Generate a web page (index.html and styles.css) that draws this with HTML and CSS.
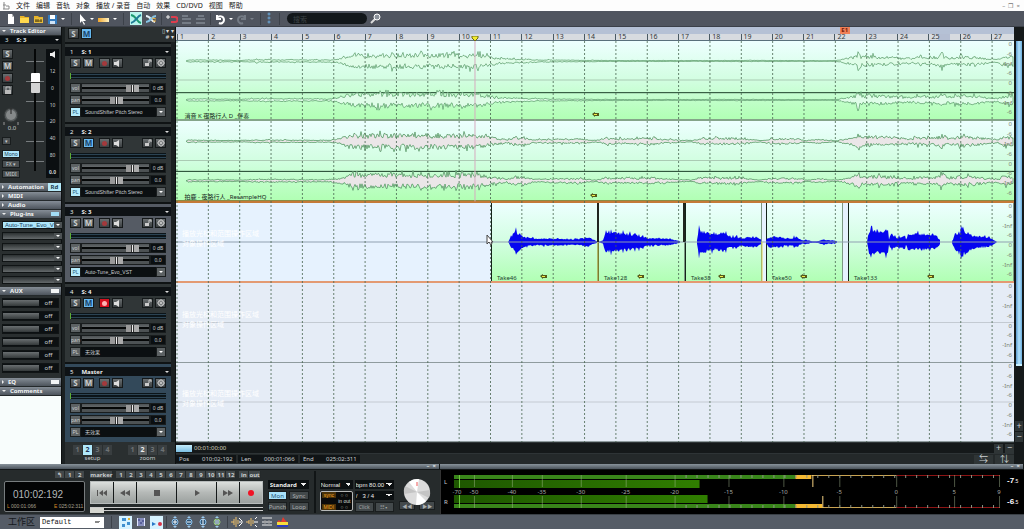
FILE: index.html
```html
<!DOCTYPE html>
<html lang="zh-CN">
<head>
<meta charset="utf-8">
<title>Track Editor</title>
<link rel="stylesheet" href="styles.css">
</head>
<body>
<nav class="menu">
  <svg class="app-icon" width="8" height="9" viewBox="0 0 8 9"><path d="M2 1v7M1 4h3M4 5h3v3H1" fill="none" stroke="#888"/></svg>
  <a href="#">文件</a><a href="#">编辑</a><a href="#">音轨</a><a href="#">对象</a><a href="#">播放 / 录音</a><a href="#">自动</a><a href="#">效果</a><a href="#">CD/DVD</a><a href="#">视图</a><a href="#">帮助</a>
  <span class="window-buttons">–&nbsp; ❐&nbsp; ×</span>
</nav>

<header class="toolbar">
  <button aria-label="New"><svg width="10" height="12" viewBox="0 0 10 12"><path d="M2 1h4l2 3v7H2z" fill="#fff"/><path d="M6 1v3h2" fill="#bbb"/></svg></button>
  <button aria-label="Open"><svg width="11" height="12" viewBox="0 0 11 12"><path d="M1 3h4l1 1h4v6H1z" fill="#e8b428"/><path d="M1 5h9v5H1z" fill="#ffd94e"/></svg></button>
  <button aria-label="Import"><svg width="11" height="12" viewBox="0 0 11 12"><path d="M1 3h4l1 1h4v6H1z" fill="#e8b428"/><path d="M1 5h9v5H1z" fill="#e6bd3e"/><path d="M2 8h7M3 6v3M5 6v3M8 6v3" stroke="#5f4b10"/></svg></button>
  <button aria-label="Save"><svg width="11" height="12" viewBox="0 0 11 12"><path d="M1 2h9v9H1z" fill="#347bbd"/><path d="M3 2h5v4H3z" fill="#fff"/><path d="M3 8h5v3H3z" fill="#cfe4f7"/></svg></button>
  <span class="caret"></span><i class="sep"></i>
  <button aria-label="Pointer"><svg width="9" height="12" viewBox="0 0 9 12"><path d="M2 1v9l2-2 2 4 1-1-2-3h3z" fill="#fff"/></svg></button>
  <span class="caret"></span>
  <button aria-label="Colour"><svg width="13" height="12" viewBox="0 0 13 12"><defs><linearGradient id="gold"><stop stop-color="#f1a62c"/><stop offset="1" stop-color="#fff3c4"/></linearGradient></defs><path d="M1 5h11v4H1z" fill="url(#gold)"/></svg></button>
  <span class="caret"></span><i class="sep"></i>
  <button class="lit" aria-label="Crossfade"><svg width="12" height="12" viewBox="0 0 12 12"><path d="M1 2C7 3 6 9 11 10" fill="none" stroke="#1c9a70" stroke-width="2"/><path d="M1 10C6 9 7 3 11 2" fill="none" stroke="#1f7d98" stroke-width="2"/></svg></button>
  <button aria-label="Auto crossfade"><svg width="12" height="12" viewBox="0 0 12 12"><path d="M1 3C6 3 6 9 10 9" fill="none" stroke="#e8f2f8" stroke-width="2"/><path d="M1 9C6 9 6 3 11 3" fill="none" stroke="#86c4e6" stroke-width="2"/><path d="M7 5l4 1M8 8h3" stroke="#efb23c"/></svg></button>
  <i class="sep narrow"></i>
  <button aria-label="Snap"><svg width="12" height="12" viewBox="0 0 12 12"><path d="M5 4h4a2 2 0 0 1 0 5H5" fill="none" stroke="#dc3d4e" stroke-width="2"/><path d="M0 4h4M2 2v4" stroke="#eee"/></svg></button>
  <button aria-label="Align left"><svg width="11" height="12" viewBox="0 0 11 12"><path d="M1 3h6M1 6h9M1 10h9" stroke="#747b85" stroke-width="2"/></svg></button>
  <button aria-label="Align right"><svg width="11" height="12" viewBox="0 0 11 12"><path d="M3 3h6M1 6h9M1 10h9" stroke="#747b85" stroke-width="2"/></svg></button>
  <i class="sep narrow"></i>
  <button aria-label="Undo"><svg width="11" height="12" viewBox="0 0 11 12"><path d="M2 2v4h4M2 5c2-3 7-2 7 2 0 3-3 4-5 3" fill="none" stroke="#fff" stroke-width="2"/></svg></button>
  <span class="caret"></span>
  <button aria-label="Redo"><svg width="11" height="12" viewBox="0 0 11 12"><path d="M9 2v4H5M9 5C7 2 2 3 2 7c0 3 3 4 5 3" fill="none" stroke="#747b85" stroke-width="2"/></svg></button>
  <span class="caret dim"></span><i class="sep"></i>
  <svg width="5" height="13" viewBox="0 0 5 13"><g fill="none" stroke="#6ba8d8"><circle cx="2" cy="2" r="1"/><circle cx="2" cy="6" r="1"/><circle cx="2" cy="10" r="1"/></g></svg>
  <i class="sep wide"></i>
  <input class="search" type="text" value="搜索" aria-label="搜索">
  <svg width="12" height="13" viewBox="0 0 12 13"><path d="M5 7l-4 4" stroke="#ddd" stroke-width="2"/><circle cx="7" cy="5" r="3" fill="#8a919a" stroke="#fff"/></svg>
</header>

<main class="work">
  <aside class="editor">
    <h2 class="bar"><i class="tri down"></i>Track Editor</h2>
    <div class="editor-name"><span>3</span><b>S: 3</b><i class="tri-w"></i></div>
    <section class="strip">
      <div class="strip-left">
        <button class="key">S</button><button class="key">M</button><button class="key" aria-label="Record"><i class="rec"></i></button><button class="key" aria-label="Lock"><svg width="8" height="8" viewBox="0 0 8 8"><path d="M1 4h6v4H1z" fill="#bbb"/><path d="M2 4V1h4v3" fill="none" stroke="#bbb"/></svg></button>
        <svg class="dial" width="20" height="22" viewBox="0 0 20 22"><circle cx="9" cy="10" r="7" fill="#555a5b" stroke="#303435"/><circle cx="9" cy="10" r="5" fill="#85898a"/><path d="M9 3v6" stroke="#222"/><path d="M2 17v3M16 17v3" stroke="#999"/></svg>
        <span class="dial-value">0.0</span>
        <button class="tiny short">▾</button>
        <button class="tiny on">Mono</button><button class="tiny">FX ▾</button><button class="tiny">MIDI</button>
      </div>
      <div class="fader"><input type="range" min="0" max="100" value="76" aria-label="Volume"></div>
      <div class="scale"><svg width="7" height="7" viewBox="0 0 7 7"><path d="M1 2h2l3-2v7L3 5H1z" fill="#eee"/></svg><span>12</span><span>0</span><span>10</span><span>20</span><span>40</span><span>80</span><b>0.0</b></div>
    </section>
    <h2 class="bar"><i class="tri"></i>Automation<span class="rd">Rd</span></h2>
    <h2 class="bar"><i class="tri"></i>MIDI</h2>
    <h2 class="bar"><i class="tri"></i>Audio</h2>
    <h2 class="bar"><i class="tri down"></i>Plug-ins<span class="led blue"></span></h2>
    <div class="slots" id="slots"></div>
    <h2 class="bar"><i class="tri down"></i>AUX<span class="led"></span></h2>
    <div class="aux" id="aux"></div>
    <h2 class="bar"><i class="tri"></i>EQ<span class="led"></span></h2>
    <h2 class="bar"><i class="tri down"></i>Comments</h2>
    <textarea class="comments" aria-label="Comments"></textarea>
  </aside>

  <section class="tracks">
    <div class="tracks-top"><button class="key">S</button><button class="key blue">M</button><span class="top-tools"><span>▯ ▾ ▾</span><span># ▾</span></span></div>
    <div id="tracks"></div>
    <div class="presets">
      <div><span class="preset-row"><button>1</button><button class="on">2</button><button>3</button><button>4</button></span>setup</div>
      <div><span class="preset-row"><button>1</button><button class="mid">2</button><button>3</button><button>4</button></span>zoom</div>
    </div>
  </section>

  <section class="timeline">
    <div class="ruler-top"><span class="marker">E1</span></div>
    <div class="ruler" id="ruler"></div>
    <div class="lanes" id="lanes"></div>
    <div class="hscroll"><span class="thumb"></span><span class="time">00:01:00:00</span><button aria-label="Zoom in">+</button><button aria-label="Zoom out">−</button></div>
    <div class="posbar"><span><b>Pos</b>010:02:192</span><span><b>Len</b>000:01:066</span><span><b>End</b>025:02:311</span><button class="end" aria-label="Fit horizontally">⇆</button><button aria-label="Fit vertically">⇅</button></div>
  </section>

  <div class="vscroll"><span class="vthumb"></span><button aria-label="Zoom in">+</button><button aria-label="Zoom out">−</button></div>
</main>

<section class="dock">
  <div class="transport">
    <div class="grip"><span>–&nbsp; ×</span></div>
    <div class="transport-body">
      <div class="position">
        <div class="nums right"><button>↰</button><button>1</button><button>2</button></div>
        <div class="display"><strong>010:02:192</strong><div><span>L <em>000:01:066</em></span><span>E <em>025:02:311</em></span></div></div>
      </div>
      <div class="play">
        <div class="nums"><button>marker</button><i></i><button>1</button><button>2</button><button>3</button><button>4</button><button>5</button><button>6</button><button>7</button><button>8</button><button>9</button><button>10</button><button>11</button><button>12</button><i></i><button>in</button><button>out</button></div>
        <div class="keys">
          <button aria-label="To start"><svg width="12" height="8" viewBox="0 0 12 8"><path d="M1 1h1v6H1zM7 1v6L3 4zM11 1v6L7 4z" fill="#555"/></svg></button>
          <button aria-label="Rewind"><svg width="12" height="8" viewBox="0 0 12 8"><path d="M6 1v6L1 4zM11 1v6L6 4z" fill="#555"/></svg></button>
          <button aria-label="Stop"><svg width="8" height="8" viewBox="0 0 8 8"><path d="M1 1h6v6H1z" fill="#555"/></svg></button>
          <button aria-label="Play"><svg width="8" height="8" viewBox="0 0 8 8"><path d="M2 1l5 3-5 3z" fill="#555"/></svg></button>
          <button aria-label="Forward"><svg width="12" height="8" viewBox="0 0 12 8"><path d="M1 1l5 3-5 3zM6 1l5 3-5 3z" fill="#555"/></svg></button>
          <button aria-label="Record"><svg width="8" height="8" viewBox="0 0 8 8"><circle cx="4" cy="4" r="3" fill="#f01325"/></svg></button>
        </div>
        <input class="scrub" type="range" min="0" max="100" value="0" aria-label="Scrub">
      </div>
      <div class="modes">
        <select aria-label="Mode"><option>Standard</option></select>
        <button class="on">Mon</button><button>Sync</button><button>Punch</button><button>Loop</button>
      </div>
      <div class="tempo">
        <select aria-label="Speed"><option>Normal</option></select><select aria-label="Tempo"><option>bpm 80.00</option></select>
        <div class="sync"><span class="tag">sync</span><span>○ ○</span><span></span><span>in out</span><span class="tag">MIDI</span><span>○ ○</span></div>
        <select aria-label="Meter"><option>/ &nbsp; 3 / 4</option></select>
        <div class="click"><button>Click</button><button>☷▪</button></div>
      </div>
      <div class="jog"><svg width="28" height="28" viewBox="0 0 28 28"><circle cx="14" cy="14" r="13" fill="#dcdcdc"/><path d="M14 14L6 4a13 13 0 0 1 10-3zM14 14l9 9a13 13 0 0 1-10 4z" fill="#fff"/><path d="M14 14L1 16a13 13 0 0 1 1-8zM14 14l13-2a13 13 0 0 1-1 8z" fill="#c4c4c4"/><path d="M14 4v4" stroke="#e55"/></svg><div><button>◀◀</button><button>▶▶</button></div></div>
    </div>
  </div>
  <div class="meters">
    <div class="grip"><span>–&nbsp; ×</span></div>
    <div class="meters-body">
      <div class="lr"><span>L</span><span>R</span></div>
      <svg id="meter" class="meter" height="44"></svg>
      <div class="peaks"><b>-7<small>.5</small></b><b>-6<small>.5</small></b></div>
    </div>
  </div>
</section>

<footer class="footbar">
  <label for="ws">工作区</label><select id="ws"><option>Default</option></select>
  <i class="sep first"></i>
  <button class="lit" aria-label="Blocks"><svg width="12" height="12" viewBox="0 0 12 12"><path d="M2 2h4v3H2zM7 6h3v3H7zM2 8h3v3H2z" fill="#3f8fd0"/><path d="M8 2h2v2H8z" fill="#e7b52d"/></svg></button>
  <button aria-label="Mixer"><svg width="12" height="12" viewBox="0 0 12 12"><path d="M2 2h8v8H2z" fill="#dfe6ff"/><path d="M4 2v8M6 2v8M8 2v8M3 4h2M5 7h2M7 5h2" stroke="#2a3378"/></svg></button>
  <button class="lit" aria-label="Transport"><svg width="12" height="12" viewBox="0 0 12 12"><path d="M1 6l4 2-4 2z" fill="#2a78c8"/><circle cx="9" cy="8" r="2" fill="#d8364a"/></svg></button>
  <i class="sep"></i>
  <span class="lenses" id="lenses"></span>
  <i class="sep"></i>
  <button aria-label="Wave in"><svg width="12" height="12" viewBox="0 0 12 12"><path d="M0 6h3M3 3v6M5 1v10M7 4v4" stroke="#eec06a"/><path d="M8 2l3 3M8 10l3-3M8 6h4" stroke="#fff"/></svg></button>
  <button aria-label="Wave out"><svg width="12" height="12" viewBox="0 0 12 12"><path d="M0 6h3M3 4v4M5 2v8M7 4v4" stroke="#eec06a"/><path d="M9 3l2-2M9 9l2 2M8 6h4" stroke="#fff"/></svg></button>
  <button aria-label="Lines"><svg width="12" height="12" viewBox="0 0 12 12"><path d="M1 2h10M1 6h10M1 9h10" stroke="#eee"/><path d="M4 4v4M8 4v5" stroke="#999"/></svg></button>
  <button aria-label="Spectrum"><svg width="13" height="12" viewBox="0 0 13 12"><path d="M1 8V6l2-2 2 2 2-5 2 3 3 3v1z" fill="#e53b2e"/><path d="M1 6h11v3H1z" fill="#f6dc3c"/><path d="M1 9h11v2H1z" fill="#2c3bbd"/></svg></button>
</footer>
<script src="app.js"></script>
</body>
</html>
```
FILE: styles.css
```css
* { box-sizing: border-box; }
body {
  margin: 0; min-height: 100vh; display: flex; flex-direction: column;
  background: #1e2324; color: #c9cdcf;
  font: 6px/8px "Noto Sans", "Noto Sans CJK SC", sans-serif;
}
button, input, select, textarea { font: inherit; color: inherit; border: 0; padding: 0; margin: 0; }
button { display: flex; align-items: center; justify-content: center; background: none; }
svg { display: block; flex: none; }
select { appearance: none; border-radius: 0; }
h2 { margin: 0; font: inherit; }

.menu { height: 11px; display: flex; align-items: center; gap: 6px; padding: 0 4px 0 2px; background: #fdfdfd; font-size: 7px; }
.menu a { color: #222; text-decoration: none; white-space: nowrap; }
.window-buttons { margin-left: auto; color: #777; font-size: 6px; }

.toolbar { height: 16px; display: flex; align-items: center; gap: 3px; padding: 0 6px; background: #50555f; border-bottom: 1px solid #3b4048; }
.toolbar .lit { background: #b9f4ec; height: 13px; }
.sep { width: 1px; height: 12px; margin: 0 3px; background: #3c4149; }
.sep.narrow { margin: 0 1px; }
.sep.wide { margin: 0 4px; }
.caret { border: 2px solid transparent; border-top-color: #fff; border-bottom: 0; }
.caret.dim { border-top-color: #7a818b; }
.search { width: 80px; height: 11px; border-radius: 6px; background: #12171a; color: #3c4346; padding: 0 6px; font-size: 7px; }

.work { flex: 1; display: grid; grid-template-columns: 62px 114px minmax(0, 1fr) 10px; }

.editor { background: #2a2f30; border-right: 1px solid #0d1011; display: flex; flex-direction: column; }
.bar { height: 9px; display: flex; align-items: center; gap: 4px; padding-left: 2px; background: linear-gradient(#858d96, #4d545c); color: #f1f3f4; font-weight: bold; border-bottom: 1px solid #24292b; }
.tri { border: 2px solid transparent; border-left-color: #eee; border-right: 0; }
.tri.down { border: 2px solid transparent; border-top-color: #eee; border-bottom: 0; }
.tri-w { border: 2px solid transparent; border-top-color: #ddd; border-bottom: 0; margin-left: auto; }
.rd { margin-left: auto; width: 16px; height: 8px; background: #b5eaf9; color: #1c3e52; text-align: center; }
.led { margin: 0 2px 0 auto; width: 8px; height: 4px; background: #f2f4f5; }
.led.blue { background: #a3dcf5; }
.editor-name { height: 8px; display: flex; align-items: center; gap: 8px; padding: 0 2px 0 5px; background: #0b1013; color: #dfe2e3; }
.strip { height: 139px; display: grid; grid-template-columns: 22px 18px 13px; gap: 2px; padding: 5px 2px 7px; }
.strip-left { display: flex; flex-direction: column; align-items: flex-start; gap: 2px; }
.key { width: 11px; height: 10px; background: linear-gradient(#6a6f71, #3b4042); border: 1px solid #15191a; color: #c9cdce; font: bold 8px/8px "Noto Sans", sans-serif; }
.key.blue { background: #69b8ee; color: #19456a; }
.key.hot { background: #d40f1e; }
.rec { width: 5px; height: 5px; border-radius: 50%; background: #a3393c; }
.hot .rec { background: #ffb4b4; }
.dial { margin-top: 8px; }
.dial-value { width: 20px; margin-top: -5px; text-align: center; }
.tiny { width: 18px; height: 8px; background: #4b5052; border: 1px solid #191d1e; font-size: 5px; }
.tiny.short { width: 9px; margin: 3px 0; }
.tiny.on { background: #aee6fb; color: #245; }
.fader { display: flex; justify-content: center; background: repeating-linear-gradient(transparent 0 12px, #777c7e 12px 13px, transparent 13px 20px); }
.fader input { appearance: none; writing-mode: vertical-lr; direction: rtl; width: 12px; height: 122px; background: linear-gradient(90deg, transparent 5px, #050707 5px 7px, transparent 7px); }
.fader input::-webkit-slider-thumb { appearance: none; width: 9px; height: 20px; border-radius: 1px; background: linear-gradient(#fff 9px, #333 9px 10px, #d4d4d4 10px); }
.scale { background: #0b0f11; display: flex; flex-direction: column; align-items: center; justify-content: space-between; padding: 2px 0; font-size: 5px; }
.slots { display: grid; grid-auto-rows: 8px; gap: 3px; padding: 2px 2px 3px; }
.slot { display: grid; grid-template-columns: 1fr 8px; background: linear-gradient(#2c3132, #64696b); border: 1px solid #101415; }
.slot.on span { background: #aee6fb; color: #17405c; padding-left: 2px; font-family: "Liberation Sans", sans-serif; line-height: 6px; white-space: nowrap; }
.slot button { background: #4d5254; }
.aux { display: grid; grid-auto-rows: 13px; padding: 0 2px 4px; }
.aux div { display: grid; grid-template-columns: 36px 1fr; height: 10px; margin-top: 2px; border: 1px solid #101415; background: #0c1012; text-align: center; }
.aux i { background: linear-gradient(#6a6f71, #34393a); margin: 1px 0; }
.comments { flex: 1; min-height: 60px; resize: none; background: #f8fdfc; border-radius: 0; }

.tracks { background: #1b2021; padding-left: 3px; border-right: 1px solid #0d1011; display: flex; flex-direction: column; }
.tracks-top { height: 15px; display: flex; align-items: center; gap: 2px; padding: 0 1px 2px 3px; background: #2b3031; }
.tracks-top .key { height: 11px; }
.top-tools { margin-left: auto; text-align: right; line-height: 6px; color: #ddd; display: flex; flex-direction: column; }
.track { height: 80px; margin-right: 4px; padding: 3px 0 0; border-top: 2px solid #0f1314; background: #303637; }
.track.sel { background: #555b64; }
.track.master { background: #33495a; }
.track-name { height: 9px; display: flex; align-items: center; gap: 8px; padding: 0 2px 0 5px; background: #0e1215; color: #eceeef; }
.track-name b { font-size: 6px; }
.track-keys { height: 11px; display: flex; gap: 2px; padding: 0 5px; margin-top: 2px; }
.track-keys .gap { margin-left: 3px; }
.track-keys .far { margin-left: auto; }
.level { height: 6px; margin: 4px 5px; background: linear-gradient(#0c1418 1px, #2b4353 1px 2px, #0c1418 2px 4px, #2b4353 4px 5px, #0c1418 5px); border-left: 1px solid #5cae34; }
.row { display: grid; grid-template-columns: 11px 69px 1fr; height: 10px; margin: 0 5px 2px; font-size: 5px; line-height: 8px; }
.row label { background: #5d6264; border: 1px solid #191d1e; text-align: center; }
.row output { background: #0b0f11; text-align: center; border: 1px solid #191d1e; white-space: nowrap; }
.row input { appearance: none; width: 69px; height: 10px; border: 1px solid #191d1e; background: linear-gradient(#4d5254, #63686a 3px, #050707 3px 5px, #4d5254 5px); }
.row input::-webkit-slider-thumb { appearance: none; width: 13px; height: 7px; background: linear-gradient(90deg, #999 5px, #333 5px 6px, #eee 6px 7px, #333 7px 8px, #aaa 8px); }
.row.pl { grid-template-columns: 11px 1fr 10px; font-family: "Liberation Sans", "Noto Sans CJK SC", sans-serif; margin-bottom: 0; }
.row.pl span { background: #0b0f11; padding-left: 4px; white-space: nowrap; line-height: 10px; }
.row.pl .on { background: #b5ebfc; color: #245a78; }
.row button { background: #5d6264; border: 1px solid #191d1e; }
.row .caret { box-sizing: content-box; }
.presets { flex: 1; display: flex; justify-content: space-around; padding-top: 3px; text-align: center; line-height: 6px; background: #2a2f30; }
.preset-row { display: grid; grid-template-columns: repeat(4, 9px); gap: 1px; }
.preset-row button { height: 10px; background: #393e40; color: #6d7274; font-weight: bold; font-size: 7px; }
.preset-row .on { background: #b0e8fb; color: #235; }
.preset-row .mid { background: #5a5f61; color: #eee; }

.timeline { display: flex; flex-direction: column; background: #15191a; }
.ruler-top { position: relative; height: 7px; background: #b5c1d5; }
.marker { position: absolute; left: 79.2%; top: 0; width: 10px; height: 7px; background: #f08058; color: #731c0c; text-align: center; font-weight: bold; line-height: 7px; }
.ruler { height: 7px; display: grid; grid-template-columns: repeat(26, 313fr) 230fr; padding-left: 1px; background: linear-gradient(#b4bed2, #b4bed2) 92.2% 0 / 12px 7px no-repeat #d7dbe0; border-bottom: 1px solid #59707c; color: #33383c; font-size: 7px; line-height: 6px; position: relative; }
.ruler span { border-left: 1px solid #4a5a64; padding-left: 2px; }
.cue { position: absolute; left: 35.7%; bottom: -1px; margin-left: -4px; }
.lanes { position: relative; display: grid; grid-template-rows: 80px 80px 82px 80px 79px; background: #e5ecf6; color: #20402c; }
.lane { position: relative; overflow: hidden; }
.plot, .grid-lines { position: absolute; inset: 0; width: 100%; height: 100%; }
.lane.audio, .clip { background: linear-gradient(#edffff, #d2fee1 50%, #b1ffb4); }
.lane.l1 { border-bottom: 2px solid #85a58a; }
.lane.l2 { border-bottom: 1px solid #8a8c45; }
.lane.l3 { border-top: 2px solid #c47a38; border-bottom: 2px solid #e39a72; background: #e6f2fe; }
.lane.l4, .lane.l5 { border-bottom: 1px solid #8f9b9e; }
.lane-title { position: absolute; bottom: -1px; left: 1%; color: #14241a; }
.key-mark { position: absolute; bottom: 2px; }
.ghost { position: absolute; left: 6px; color: #fff; font-size: 7px; line-height: 10px; white-space: nowrap; }
.ghost.low { bottom: 32px; }
.clip { position: absolute; top: 0; bottom: 0; border-left: 1px solid #14241a; border-right: 1px solid #7d9884; }
.clip span { position: absolute; left: 5px; bottom: -1px; }
.db { position: absolute; right: 2px; top: 0; bottom: 0; display: flex; flex-direction: column; justify-content: space-between; text-align: right; color: #7d7f70; line-height: 6px; }
.grid-lines { pointer-events: none; }
.hscroll, .posbar { height: 11px; display: flex; align-items: center; gap: 2px; border-top: 1px solid #2e3436; }
.thumb { width: 16px; height: 7px; background: linear-gradient(#c4ecfb, #7cbfe3); }
.time { margin-right: auto; color: #d2d2bd; }
.hscroll button { width: 9px; height: 9px; background: #2f3536; font-size: 9px; }
.posbar { background: #24292a; }
.posbar span { width: 60px; background: #101416; padding-left: 3px; }
.posbar b { display: inline-block; width: 23px; font-weight: normal; }
.posbar .end { margin-left: auto; }
.posbar button { width: 19px; height: 9px; background: #2f3536; font-size: 9px; }
.vscroll { display: flex; flex-direction: column; padding: 14px 1px 22px; background: #15191a; }
.vthumb { flex: 1; max-height: 325px; margin: 0 1px auto; background: linear-gradient(90deg, #5c9cd0, #b4e3fc, #6caede); border-bottom: 2px solid #c8f0ff; }
.vscroll button { height: 10px; margin-top: 1px; background: #2f3536; font-size: 9px; }

.dock { display: grid; grid-template-columns: 440px minmax(0, 1fr); height: 50px; background: #262b2c; }
.grip { height: 6px; background: linear-gradient(#89939b, #4a535b); border-bottom: 1px solid #121617; border-right: 1px solid #121617; text-align: right; padding-right: 3px; line-height: 5px; color: #fff; }
.transport-body { display: flex; gap: 5px; padding: 1px 4px 0; }
.nums { height: 8px; display: flex; margin-bottom: 2px; font-weight: bold; }
.nums.right { justify-content: flex-end; }
.nums button { min-width: 10px; height: 7px; background: #42484a; border-right: 1px solid #24292a; }
.nums i { width: 3px; }
.position { width: 83px; }
.display { height: 31px; border: 1px solid #777c7e; border-radius: 2px; background: #030405; padding: 7px 1px 0 2px; color: #b4b8ba; }
.display strong { display: block; margin-left: 6px; font: 10px/12px "Liberation Sans", sans-serif; }
.display div { display: flex; justify-content: space-between; margin-top: 2px; color: #d48c2a; font: 5px/6px "Liberation Sans", sans-serif; }
.display em { font-style: normal; color: #a8a28e; }
.play { width: 176px; }
.keys { height: 23px; display: grid; grid-template-columns: 23fr 23fr 41fr 40fr 23fr 23fr; gap: 1px; border: 1px solid #b8bcbc; background: #15191a; }
.keys button { background: linear-gradient(#dcdfdd, #b5b9b7 50%, #9ca19f); }
.scrub { display: block; appearance: none; width: 100%; height: 6px; margin-top: 3px; background: linear-gradient(#ccc 1px, #1a1e1f 1px 3px, #ccc 3px 4px, transparent 4px); }
.scrub::-webkit-slider-thumb { appearance: none; width: 14px; height: 5px; background: #d5d6d0; }
.modes { width: 42px; display: grid; grid-template-columns: 1fr 1fr; grid-template-rows: 9px 9px 9px; gap: 2px; padding-top: 9px; }
.modes select { grid-column: span 2; }
.transport select { width: 100%; height: 9px; color: #eee; padding-left: 2px; font-weight: bold;
  background: linear-gradient(to bottom left, #eee 50%, transparent 50%) right 5px top 3px / 3px 3px no-repeat, linear-gradient(to bottom right, #eee 50%, transparent 50%) right 2px top 3px / 3px 3px no-repeat #0c1012; }
.transport .tempo select { font: 6px/8px "Liberation Sans", sans-serif; padding-left: 1px; }
.modes button, .click button, .jog button { background: #43494b; border: 1px solid #1a1e1f; color: #a9adae; }
.modes .on { background: #a8e2fb; color: #1f5577; }
.tempo { width: 80px; padding: 9px 0 0 4px; border-left: 2px solid #111516; display: grid; grid-template-columns: 33px 39px; grid-template-rows: 9px 9px 9px; gap: 2px; }
.sync { grid-row: span 2; border: 1px solid #b7b9b8; border-radius: 2px; background: #0a0b0b; color: #d9dbd8; display: grid; grid-template-columns: 14px 1fr; column-gap: 1px; padding-left: 1px; line-height: 6px; font-size: 5px; font-family: "Liberation Sans", sans-serif; text-align: center; }
.tag { background: #4a3208; color: #f4a826; }
.click { display: grid; grid-template-columns: 1fr 1fr; gap: 1px; }
.click button { font-size: 5px; }
.jog { width: 38px; padding-top: 7px; display: flex; flex-direction: column; align-items: center; }
.jog div { display: grid; grid-template-columns: 16px 16px; gap: 4px; margin-top: -5px; }
.jog svg { position: relative; z-index: 1; }
.jog button { height: 9px; font-size: 5px; }
.meters-body { height: 44px; display: flex; background: #000; border-left: 1px solid #333; }
.lr { width: 11px; display: flex; flex-direction: column; justify-content: space-between; padding: 8px 0 8px 3px; }
.meter { flex: 1; min-width: 0; font-size: 6px; }
.peaks { width: 22px; display: flex; flex-direction: column; justify-content: space-between; padding: 6px 2px 7px 5px; color: #fff; font: bold 8px/10px "Liberation Sans", sans-serif; white-space: nowrap; }
.peaks small { font-size: 5px; font-weight: normal; }

.footbar { height: 15px; display: flex; align-items: center; gap: 3px; padding: 0 8px; background: #555c66; border-top: 1px solid #3a4046; }
.footbar label { color: #16191c; font-size: 9px; }
.footbar select { width: 64px; height: 11px; margin-left: 2px; color: #111; padding-left: 2px; font: 7px/9px "Liberation Mono", monospace;
  background: linear-gradient(to bottom left, #888 50%, transparent 50%) right 7px top 4px / 3px 3px no-repeat, linear-gradient(to bottom right, #888 50%, transparent 50%) right 4px top 4px / 3px 3px no-repeat #fff; }
.footbar .lit { background: #d6f2ff; width: 13px; height: 13px; }
.footbar .sep { margin: 0; }
.footbar .sep.first { margin: 0 4px; }
.lenses { display: flex; gap: 2px; }
```
FILE: app.js
```javascript
const byId = id => document.getElementById(id);
const LEFT = 176, SPAN = 838;
const pct = x => ((x - LEFT) / SPAN * 100).toFixed(3) + '%';

let seed = 7;
const rnd = () => (seed = (seed * 16807) % 2147483647) / 2147483647;

// Interpolates an [x, amplitude] envelope.
function ampAt(env, x) {
  for (let i = 1; i < env.length; i++) {
    if (x <= env[i][0]) {
      const [x0, a0] = env[i - 1], [x1, a1] = env[i];
      return a0 + (a1 - a0) * (x - x0) / (x1 - x0 || 1);
    }
  }
  return 0;
}

function wave(env, mid, rough) {
  const up = [], down = [];
  for (let x = env[0][0]; x <= env[env.length - 1][0]; x++) {
    const a = ampAt(env, x), px = x - LEFT;
    const peak = rnd() < 0.12 ? 1.35 : 1;
    up.push(px + ' ' + (mid - a * peak * (1 - rough * rnd())).toFixed(1));
    down.unshift(px + ' ' + (mid + a * peak * (1 - rough * rnd())).toFixed(1));
  }
  return 'M' + up.concat(down).join('L') + 'Z';
}

const song = [[186,0],[188,1.5],[240,1],[260,1.8],[330,1.4],[338,3],[344,5],[352,8],[400,8],[460,8],[475,8],[484,7],[490,5],[505,3],[540,1.5],[580,1]];
const tail = [[838,1],[850,4],[856,6],[858,11],[862,5],[872,6],[890,5],[912,3],[918,5],[930,4],[938,5],[942,9],[948,4],[960,6],[975,5],[990,3],[998,2],[1002,5],[1013,6]];
const soft = song.concat([[620,.6],[700,.6],[740,.8],[830,.4]], tail);
const dense = song.slice(0, -2).concat([[506,2],[514,5],[524,5],[534,2],[580,3],[596,1],[606,4],[625,3],[650,4],[680,1.5],[692,1],[702,4],[735,4],[760,1],[770,3],[800,3],[805,1],[820,2.5],[830,1]], tail);

const svg = body => `<svg class="plot" viewBox="0 0 ${SPAN} 80" preserveAspectRatio="none">${body}</svg>`;
const hline = (y, c) => `<path d="M0 ${y}H${SPAN}" stroke="${c}"/>`;
const db = '<div class="db"><span>0</span><span>-6</span><span>-Inf</span><span>-6</span><span>0</span><span>-6</span><span>-Inf</span><span>-6</span><span></span></div>';
const mark = x => `<svg class="key-mark" style="left:${pct(x - 4)}" width="8" height="5" viewBox="0 0 8 5"><path d="M0 2l3-2v1h4v3H3v1z" fill="#55591a"/><path d="M2 2h3v1H2z" fill="#f2ee4c"/></svg>`;
const ghosts = '<span class="ghost low">播放光标和范围操作区域<br>对象操作区域</span>';

const stereo = (env, fill, opacity, divider) => svg(
  hline(40, '#a9cbb2') + hline(divider, '#183c25') +
  `<g fill="${fill}" stroke="#5e9e6c" stroke-opacity="${opacity}">
   <path d="${wave(env, 20.5, .65)}"/><path d="${wave(env, 60.5, .65)}"/></g>`);

const vocals = [
  [[508,0],[511,6],[515,12],[519,10],[526,5],[535,4],[560,4],[572,3],[588,5],[597,1]],
  [[598,0],[603,2],[605,12],[625,10],[640,7],[650,4],[668,4],[680,1]],
  [[697,2],[699,14],[705,12],[715,8],[722,11],[732,6],[740,5],[755,6],[761,3]],
  [[766,2],[770,7],[778,6],[790,4],[797,6],[802,2],[806,2],[812,1],[818,1],[823,3],[837,1]],
  [[867,0],[869,13],[875,14],[888,13],[889,3],[891,8],[896,5],[905,8],[906,3],[908,9],[934,9],[940,3]],
  [[952,1],[955,9],[960,12],[963,16],[970,9],[976,7],[985,6],[992,4],[997,0]]
];
const clips = [[491,598,'Take46'],[598,685,'Take128'],[685,762,'Take38'],[766,843,'Take50'],[848,1014,'Take133']]
  .map(([a, b, n]) => `<div class="clip" style="left:${pct(a)};width:${((b - a) / SPAN * 100).toFixed(3)}%"><span>${n}</span></div>`).join('');

let lines = '';
for (let i = 0; i < 27; i++) {
  const x = pct(177 + i * 31.35);
  lines += `<line x1="${x}" x2="${x}" y1="0" y2="100%" stroke="#47644f" stroke-opacity=".8" stroke-dasharray="2 2"/>`;
}
lines += `<line x1="${pct(475)}" x2="${pct(475)}" y1="0" y2="40%" stroke="#d5aabf"/>`;

byId('lanes').innerHTML =
  `<div class="lane audio l1">${stereo(soft, '#dffde8', .75, 53)}<span class="lane-title">消音 K 夜路行人 D _伴奏</span>${mark(596)}${db}</div>
   <div class="lane audio l2">${stereo(dense, '#ebe6e8', .85, 51)}<span class="lane-title">拍鹿 - 夜路行人 _ResampleHQ</span>${mark(594)}${db}</div>
   <div class="lane l3">${clips}${svg(`<g fill="#0505f0">${vocals.map(v => `<path d="${wave(v, 40, .35)}"/>`).join('')}</g>` + hline(40, '#8f9fb0') +
     '<path d="M422 0v40M508 0v40" stroke="#20251f" stroke-width="2"/><path d="M422 40v40M586 40v40" stroke="#e0d84b"/>')}
     ${[544,641,722,804,931].map(mark).join('')}${ghosts}${db}</div>
   <div class="lane l4">${svg(hline(40, '#c3cad2'))}${ghosts}${db}</div>
   <div class="lane l5">${svg(hline(40, '#c3cad2'))}${ghosts}${db}</div>
   <svg class="grid-lines">${lines}
     <svg x="${pct(486)}" y="194" width="8" height="12"><path d="M1 0v9l2-2 2 3 1-1-1-2h2z" fill="#fff" stroke="#444"/></svg></svg>`;

byId('ruler').innerHTML = Array.from({ length: 27 }, (_, i) => `<span>${i + 1}</span>`).join('') +
  '<svg class="cue" width="8" height="5" viewBox="0 0 8 5"><path d="M1 0h6v2L4 5 1 2z" fill="#f3ec30" stroke="#6f6c14"/></svg>';

const speaker = '<svg width="7" height="7" viewBox="0 0 7 7"><path d="M0 2h2l3-2v7L2 5H0z" fill="#ddd"/></svg>';
const lock = '<svg width="8" height="8" viewBox="0 0 8 8"><path d="M1 4h4v3H1z" fill="#ccc"/><path d="M5 4V1h2v2" fill="none" stroke="#ccc"/></svg>';
const flake = '<svg width="8" height="8" viewBox="0 0 8 8"><circle cx="4" cy="4" r="3" fill="none" stroke="#bbb"/><path d="M4 0v8M0 4h8M2 2l4 4M6 2L2 6" stroke="#ccc" stroke-opacity=".7"/></svg>';
const tracks = [
  ['S: 1', 'SoundShifter Pitch Stereo', ''],
  ['S: 2', 'SoundShifter Pitch Stereo', 'm'],
  ['S: 3', 'Auto-Tune_Evo_VST', 'sel'],
  ['S: 4', '无效果', 'm hotrec'],
  ['Master', '无效果', 'master']
];
byId('tracks').innerHTML = tracks.map(([name, plug, flags], i) => {
  const n = i + 1, has = f => flags.split(' ').includes(f);
  return `<article class="track ${has('sel') ? 'sel' : ''} ${has('master') ? 'master' : ''}">
    <div class="track-name"><span>${n}</span><b>${name}</b><i class="tri-w"></i></div>
    <div class="track-keys"><button class="key">S</button><button class="key ${has('m') ? 'blue' : ''}">M</button>
      <button class="key gap ${has('hotrec') ? 'hot' : ''}" aria-label="Record"><i class="rec"></i></button><button class="key" aria-label="Monitor">${speaker}</button>
      <button class="key far" aria-label="Lock">${lock}</button><button class="key" aria-label="Freeze">${flake}</button></div>
    <div class="level"></div>
    <div class="row"><label for="v${n}">vol</label><input id="v${n}" type="range" value="81"><output>0 dB</output></div>
    <div class="row"><label for="p${n}">pan</label><input id="p${n}" type="range" value="51"><output>0.0</output></div>
    <div class="row pl"><button class="${i < 3 ? 'on' : ''}">PL</button><span>${plug}</span><button aria-label="Plug-ins"><i class="caret"></i></button></div>
  </article>`;
}).join('');

byId('slots').innerHTML = Array.from({ length: 6 }, (_, i) =>
  `<div class="slot ${i ? '' : 'on'}"><span>${i ? '' : 'Auto-Tune_Evo_V'}</span><button aria-label="Choose"><i class="caret"></i></button></div>`).join('');
byId('aux').innerHTML = '<div><i></i>off</div>'.repeat(6);
byId('lenses').innerHTML = ['M3 6h4M5 4v4', 'M3 6h4', 'M5 3v6', 'M3 5h4M3 7h4'].map((d, i) =>
  `<button aria-label="Zoom ${i + 1}"><svg width="12" height="12" viewBox="0 0 12 12"><path d="M5 0l2 2H3zM5 12l2-2H3z" fill="#9cc9ee"/><circle cx="5" cy="6" r="3" fill="#2d5578" stroke="${i === 3 ? '#9fd07a' : '#8fc4ef'}"/><path d="${d}" stroke="#fff"/></svg></button>`).join('');

// Level meter: x runs over 451..1002.
const mx = x => ((x - 451) / 551 * 100).toFixed(2) + '%';
const rect = (a, b, y, h, c) => `<rect x="${mx(a)}" width="${((b - a) / 551 * 100).toFixed(2)}%" y="${y}" height="${h}" fill="${c}"/>`;
let m = '<defs><linearGradient id="g"><stop stop-color="#1e5700"/><stop offset="1" stop-color="#307e00"/></linearGradient></defs>';
m += rect(453,795,5,4,'#39851a') + rect(795,811,5,4,'#f5b932') + rect(811,896,5,1,'#c9a352') + rect(896,1000,5,1,'#8d1414');
m += rect(453,699,10,8,'url(#g)') + rect(453,707,25,8,'url(#g)');
m += rect(453,795,34,4,'#39851a') + rect(795,822,34,4,'#f5b932') + rect(822,896,37,1,'#c9a352') + rect(896,1000,37,1,'#8d1414');
m += rect(812,813,5,12,'#f5d080') + rect(822,823,26,12,'#f5d080') + rect(458,459,5,13,'#6fc740') + rect(458,459,25,13,'#6fc740');
const marks = [[456,'-70'],[473,'-50'],[511,'-40'],[541,'-35'],[580,'-30'],[625,'-25'],[674,'-20'],[728,'-15'],[783,'-10'],[839,'-5'],[896,'0'],[954,'5'],[999,'9']];
marks.forEach(([x, t], i) => {
  m += `<text x="${mx(x)}" y="24" text-anchor="middle" fill="#a8aba8">${t}</text>`;
  if (i) m += rect(x, x + 1, 5, 12, 'rgba(170,190,150,.45)') + rect(x, x + 1, 26, 12, 'rgba(170,190,150,.45)');
});
for (let i = 0; i < 29; i++) {
  const x = 685 + i * 11;
  m += rect(x, x + 1, 5, 3, '#8c9485') + rect(x, x + 1, 35, 3, '#8c9485');
}
byId('meter').innerHTML = m;
```
